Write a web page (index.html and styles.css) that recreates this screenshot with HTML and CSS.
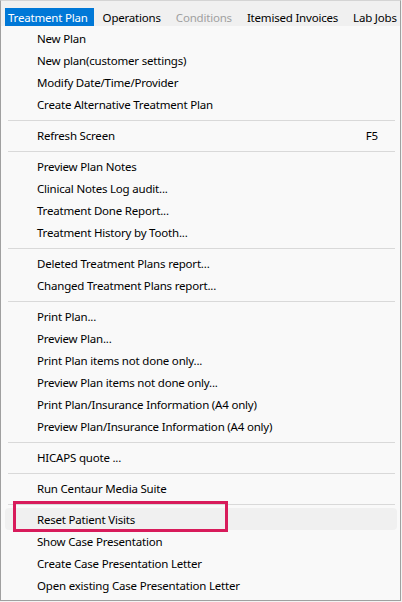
FILE: index.html
```html
<!DOCTYPE html>
<html>
<head>
<meta charset="utf-8">
<link rel="stylesheet" href="styles.css">
</head>
<body>
<div class="window">
  <div class="menubar">
    <span class="top-item active">Treatment Plan</span>
    <span class="top-item">Operations</span>
    <span class="top-item disabled">Conditions</span>
    <span class="top-item">Itemised Invoices</span>
    <span class="top-item">Lab Jobs</span>
  </div>
  <div class="dropdown">
    <div class="item">New Plan</div>
    <div class="item">New plan(customer settings)</div>
    <div class="item">Modify Date/Time/Provider</div>
    <div class="item">Create Alternative Treatment Plan</div>
    <div class="sep"></div>
    <div class="item"><span>Refresh Screen</span><span class="shortcut">F5</span></div>
    <div class="sep"></div>
    <div class="item">Preview Plan Notes</div>
    <div class="item">Clinical Notes Log audit...</div>
    <div class="item">Treatment Done Report...</div>
    <div class="item">Treatment History by Tooth...</div>
    <div class="sep"></div>
    <div class="item">Deleted Treatment Plans report...</div>
    <div class="item">Changed Treatment Plans report...</div>
    <div class="sep"></div>
    <div class="item">Print Plan...</div>
    <div class="item">Preview Plan...</div>
    <div class="item">Print Plan items not done only...</div>
    <div class="item">Preview Plan items not done only...</div>
    <div class="item">Print Plan/Insurance Information (A4 only)</div>
    <div class="item">Preview Plan/Insurance Information (A4 only)</div>
    <div class="sep"></div>
    <div class="item">HICAPS quote ...</div>
    <div class="sep"></div>
    <div class="item">Run Centaur Media Suite</div>
    <div class="sep"></div>
    <div class="item hover">Reset Patient Visits<span class="callout"></span></div>
    <div class="item">Show Case Presentation</div>
    <div class="item">Create Case Presentation Letter</div>
    <div class="item">Open existing Case Presentation Letter</div>
  </div>
</div>
</body>
</html>
```

FILE: styles.css
```css
html, body {
  margin: 0;
  padding: 0;
  background: #f3f3f3;
}
body {
  font-family: "Noto Sans", "Open Sans", sans-serif;
  font-size: 11.5px;
  letter-spacing: -0.2px;
  color: #000;
}
.window {
  width: 401px;
  height: 601px;
  box-sizing: border-box;
  border: 1px solid #a0a0a0;
  border-top-color: #d4d4d4;
  background: #f9f9f9;
  overflow: hidden;
}
.menubar {
  height: 25px;
  box-sizing: border-box;
  background: #f0f0f0;
  display: flex;
  align-items: flex-end;
  gap: 6px;
  padding-left: 4px;
}
.top-item {
  height: 18px;
  box-sizing: border-box;
  padding: 1px 6px 0 3px;
  line-height: 17px;
  white-space: nowrap;
}
.top-item.active {
  background: #0078d7;
  color: #fff;
}
.top-item.disabled {
  color: #a0a0a0;
}
.dropdown {
  padding: 1px 0 3px;
}
.item {
  position: relative;
  height: 22px;
  box-sizing: border-box;
  padding: 2px 19px 0 32px;
  line-height: 20px;
  margin: 0 3px 0 4px;
  display: flex;
  justify-content: space-between;
  white-space: nowrap;
  border-radius: 4px;
}
.item.hover {
  background: #f0f0f0;
}
.sep {
  height: 9px;
  box-sizing: border-box;
  padding-top: 5px;
  margin: 0 5px 0 7px;
}
.sep::before {
  content: "";
  display: block;
  height: 1px;
  background: #d9d9d9;
}
.callout {
  position: absolute;
  left: 8px;
  top: -7px;
  width: 215px;
  height: 31px;
  box-sizing: border-box;
  border: 3px solid #d81b5b;
}
```
